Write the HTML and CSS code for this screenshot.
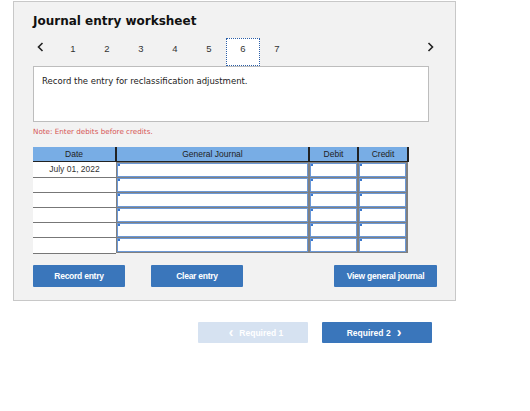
FILE: index.html
```html
<!DOCTYPE html>
<html lang="en">
<head>
  <meta charset="UTF-8" />
  <title>Journal entry worksheet</title>
  <link rel="stylesheet" href="styles.css">
</head>
<body>
  <div class="worksheet">
    <h1>Journal entry worksheet</h1>

    <div class="steps">
      <span class="step-arrow">
        <svg width="7" height="10" viewBox="0 0 7 10"><path d="M5.5 1 L1.5 5 L5.5 9" fill="none" stroke="#222" stroke-width="1.6"/></svg>
      </span>
      <span class="step">1</span>
      <span class="step">2</span>
      <span class="step">3</span>
      <span class="step">4</span>
      <span class="step">5</span>
      <span class="step active">6</span>
      <span class="step">7</span>
      <span class="step-arrow next">
        <svg width="7" height="10" viewBox="0 0 7 10"><path d="M1.5 1 L5.5 5 L1.5 9" fill="none" stroke="#222" stroke-width="1.6"/></svg>
      </span>
    </div>

    <div class="prompt">Record the entry for reclassification adjustment.</div>

    <p class="note">Note: Enter debits before credits.</p>

    <table class="journal">
      <colgroup>
        <col class="c-date"><col class="c-journal"><col class="c-debit"><col class="c-credit">
      </colgroup>
      <thead>
        <tr><th>Date</th><th>General Journal</th><th>Debit</th><th>Credit</th></tr>
      </thead>
      <tbody>
        <tr><td class="date">July 01, 2022</td><td class="in"><div class="field"></div></td><td class="in"><div class="field"></div></td><td class="in last"><div class="field"></div></td></tr>
        <tr><td class="date"></td><td class="in"><div class="field"></div></td><td class="in"><div class="field"></div></td><td class="in last"><div class="field"></div></td></tr>
        <tr><td class="date"></td><td class="in"><div class="field"></div></td><td class="in"><div class="field"></div></td><td class="in last"><div class="field"></div></td></tr>
        <tr><td class="date"></td><td class="in"><div class="field"></div></td><td class="in"><div class="field"></div></td><td class="in last"><div class="field"></div></td></tr>
        <tr><td class="date"></td><td class="in"><div class="field"></div></td><td class="in"><div class="field"></div></td><td class="in last"><div class="field"></div></td></tr>
        <tr><td class="date"></td><td class="in"><div class="field"></div></td><td class="in"><div class="field"></div></td><td class="in last"><div class="field"></div></td></tr>
      </tbody>
    </table>

    <div class="actions">
      <a class="btn" href="#">Record entry</a>
      <a class="btn" href="#">Clear entry</a>
      <a class="btn wide" href="#">View general journal</a>
    </div>
  </div>

  <div class="pager">
    <a class="btn page disabled" href="#"><span class="chev">&lsaquo;</span> Required 1</a>
    <a class="btn page" href="#">Required 2 <span class="chev">&rsaquo;</span></a>
  </div>
</body>
</html>
```

FILE: styles.css
```css
body {
  margin: 0;
  background: #ffffff;
  font-family: 'Liberation Sans', Arial, sans-serif;
  color: #222222;
}

.worksheet {
  box-sizing: border-box;
  width: 443px;
  height: 300px;
  margin: 1px 0 0 13px;
  padding: 11px 19px 0 19px;
  background: #f2f2f2;
  border: 1px solid #c8c8c8;
}

h1 {
  margin: 0;
  font-family: 'DejaVu Sans', Verdana, sans-serif;
  font-size: 12px;
  line-height: 16px;
  font-weight: bold;
  color: #111111;
}

.steps {
  display: flex;
  height: 28px;
  margin-top: 9px;
  font-size: 9.5px;
}

.step-arrow {
  width: 19px;
  padding: 4px 0 0 4px;
}

.step-arrow.next {
  width: auto;
  margin-left: auto;
  padding: 4px 2px 0 0;
}

.step {
  box-sizing: border-box;
  width: 34px;
  padding-top: 5px;
  text-align: center;
  line-height: 12px;
  color: #333333;
}

.step.active {
  background: #ffffff;
  border: 1px dotted #2c5fa8;
  padding-top: 4px;
}

.prompt {
  box-sizing: border-box;
  width: 396px;
  height: 56px;
  padding: 8px 8px;
  background: #ffffff;
  border: 1px solid #bdbdbd;
  font-family: 'DejaVu Sans', Verdana, sans-serif;
  font-size: 8.5px;
  line-height: 12px;
  color: #222222;
}

.note {
  margin: 5px 0 0 0;
  height: 20px;
  font-family: 'DejaVu Sans', Verdana, sans-serif;
  font-size: 7.2px;
  line-height: 10px;
  color: #d65454;
}

.journal {
  border-collapse: collapse;
  table-layout: fixed;
  width: 375px;
  font-size: 8.5px;
}

.c-date { width: 83px; }
.c-journal { width: 193px; }
.c-debit { width: 49px; }
.c-credit { width: 50px; }

.journal th {
  height: 14px;
  padding: 0;
  background: #78ade5;
  border-bottom: 1px solid #222222;
  border-left: 2px solid #222222;
  font-weight: normal;
  color: #222222;
}

.journal th:first-child {
  border-left: none;
}

.journal th:last-child {
  border-right: 2px solid #222222;
}

.journal tbody tr {
  height: 15px;
}

.journal td {
  padding: 0;
}

.journal td.date {
  height: 14px;
  background: #ffffff;
  border-bottom: 1px solid #777777;
  text-align: center;
  color: #333333;
}

.journal td.in {
  background: #808080;
  padding: 1px 1px 0 1px;
}

.journal td.in.last {
  padding-right: 2px;
}

.journal tr:last-child td.in {
  padding-bottom: 1px;
}

.field {
  position: relative;
  height: 12px;
  background: #ffffff;
  border: 1px solid #6b98d6;
}

.field::before {
  content: "";
  position: absolute;
  left: 0;
  top: 0;
  width: 2px;
  height: 2px;
  background: #3a78cf;
}

.actions {
  display: flex;
  gap: 26px;
  margin-top: 11px;
}

.btn {
  display: flex;
  align-items: center;
  justify-content: center;
  box-sizing: border-box;
  width: 92px;
  height: 22px;
  background: #3a76bb;
  border-radius: 1px;
  color: #ffffff;
  text-decoration: none;
  font-size: 8.5px;
  font-weight: bold;
  letter-spacing: -0.25px;
}

.btn.wide {
  width: 103px;
  margin-left: auto;
  margin-right: -1px;
}

.pager {
  display: flex;
  gap: 14px;
  padding: 21px 0 0 198px;
}

.btn.page {
  width: 110px;
  height: 21px;
  font-size: 8.5px;
  letter-spacing: 0;
}

.btn.page.disabled {
  background: #d6e2f1;
}

.chev {
  font-size: 14px;
  margin: -2px 6px 0 6px;
}
```
